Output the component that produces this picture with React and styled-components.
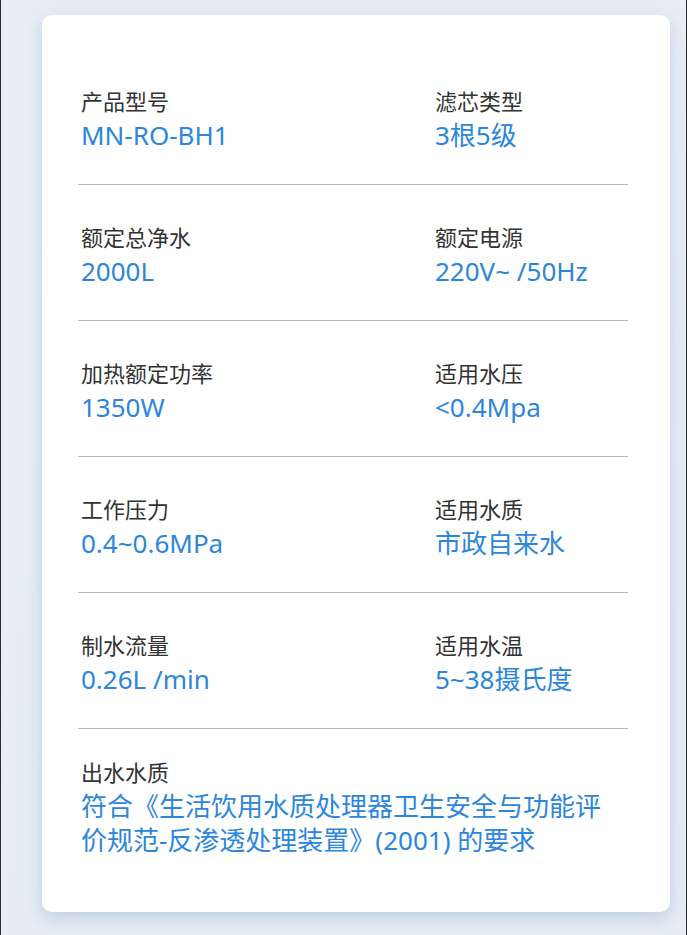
import React from 'react'
import styled, { createGlobalStyle } from 'styled-components'

const GlobalStyle = createGlobalStyle`
	html, body {
		margin: 0;
		padding: 0;
		background: #e9eff7;
	}
	body {
		font-family: 'Noto Sans CJK SC', 'Noto Sans', sans-serif;
	}
`

const Page = styled.div`
	box-sizing: border-box;
	min-height: 935px;
	padding: 15px 17px 23px 41px;
	background: linear-gradient(180deg, #e8eef6 0%, #e6edf6 100%);
	border-left: 1px solid #2a2d33;
	border-right: 1px solid #2a2d33;
`

const Card = styled.div`
	box-sizing: border-box;
	width: 628px;
	min-height: 897px;
	padding: 34px 42px 47px 36px;
	background: #ffffff;
	border-radius: 10px;
	box-shadow: 0 6px 18px rgba(120, 150, 190, 0.35);
`

const Row = styled.div`
	display: grid;
	grid-template-columns: 354px 1fr;
	padding: ${(p) => (p.last ? '27px 0 0' : '36px 0 32px')};
	border-bottom: ${(p) => (p.last ? 'none' : '1px solid #b8b8b8')};
`

const Cell = styled.div`
	display: flex;
	flex-direction: column;
	gap: 3px;
	padding-left: 3px;
	padding-right: ${(p) => (p.wide ? '24px' : '0')};
	grid-column: ${(p) => (p.wide ? '1 / -1' : 'auto')};
`

const Label = styled.div`
	font-size: 22px;
	line-height: 30px;
	color: #333333;
`

const Value = styled.div`
	font-family: 'Noto Sans', 'Noto Sans CJK SC', sans-serif;
	font-size: 26px;
	line-height: 34px;
	color: #2b86dc;
`

const specs = [
	[
		['产品型号', 'MN-RO-BH1'],
		['滤芯类型', '3根5级'],
	],
	[
		['额定总净水', '2000L'],
		['额定电源', '220V~ /50Hz'],
	],
	[
		['加热额定功率', '1350W'],
		['适用水压', '<0.4Mpa'],
	],
	[
		['工作压力', '0.4~0.6MPa'],
		['适用水质', '市政自来水'],
	],
	[
		['制水流量', '0.26L /min'],
		['适用水温', '5~38摄氏度'],
	],
]

const App = () => {
	return (
		<>
			<GlobalStyle />
			<Page>
				<Card>
					{specs.map((row, i) => (
						<Row key={i}>
							{row.map(([label, value]) => (
								<Cell key={label}>
									<Label>{label}</Label>
									<Value>{value}</Value>
								</Cell>
							))}
						</Row>
					))}
					<Row last>
						<Cell wide>
							<Label>出水水质</Label>
							<Value>
								符合《生活饮用水质处理器卫生安全与功能评价规范-反渗透处理装置》(2001) 的要求
							</Value>
						</Cell>
					</Row>
				</Card>
			</Page>
		</>
	)
}

export default App
